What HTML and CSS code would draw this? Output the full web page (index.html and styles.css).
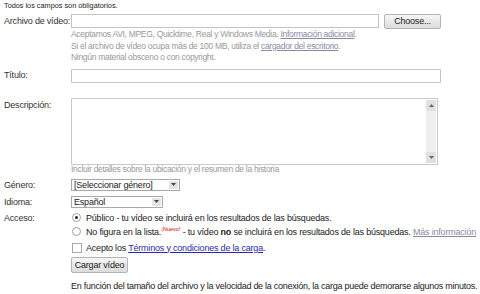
FILE: index.html
```html
<!DOCTYPE html>
<html lang="es">
<head>
<meta charset="utf-8">
<title>Subir vídeo</title>
<link rel="stylesheet" href="styles.css">
</head>
<body>
<div class="page">
  <div class="required">Todos los campos son obligatorios.</div>

  <div class="row r-file">
    <div class="label lh14">Archivo de vídeo:</div>
    <div class="field">
      <div class="file-row">
        <div class="input file-input"></div>
        <div class="btn choose">Choose...</div>
      </div>
      <div class="help">Aceptamos AVI, MPEG, Quicktime, Real y Windows Media. <a class="glink">Información adicional</a>.</div>
      <div class="help">Si el archivo de vídeo ocupa más de 100 MB, utiliza el <a class="glink">cargador del escritorio</a>.</div>
      <div class="help">Ningún material obsceno o con copyright.</div>
    </div>
  </div>

  <div class="row r-title">
    <div class="label lh12">Título:</div>
    <div class="field"><div class="input title-input"></div></div>
  </div>

  <div class="row r-desc">
    <div class="label lh14">Descripción:</div>
    <div class="field">
      <div class="textarea">
        <div class="scroll">
          <div class="sbtn"><svg width="5" height="3" viewBox="0 0 5 3"><path d="M0 3 L2.5 0 L5 3Z" fill="#666"/></svg></div>
          <div class="strack"></div>
          <div class="sbtn"><svg width="5" height="3" viewBox="0 0 5 3"><path d="M0 0 L2.5 3 L5 0Z" fill="#666"/></svg></div>
        </div>
      </div>
      <div class="help desc-help">Incluir detalles sobre la ubicación y el resumen de la historia</div>
    </div>
  </div>

  <div class="row r-genre">
    <div class="label lh12">Género:</div>
    <div class="field">
      <div class="select genre"><span>[Seleccionar género]</span><span class="arrow"><svg width="5" height="3" viewBox="0 0 5 3"><path d="M0 0 L2.5 3 L5 0Z" fill="#444"/></svg></span></div>
    </div>
  </div>

  <div class="row r-lang">
    <div class="label lh12">Idioma:</div>
    <div class="field">
      <div class="select lang"><span>Español</span><span class="arrow"><svg width="5" height="3" viewBox="0 0 5 3"><path d="M0 0 L2.5 3 L5 0Z" fill="#444"/></svg></span></div>
    </div>
  </div>

  <div class="row r-access">
    <div class="label lh14">Acceso:</div>
    <div class="field">
      <div class="opt"><span class="radio on"></span><span>Público - tu vídeo se incluirá en los resultados de las búsquedas.</span></div>
      <div class="opt"><span class="radio"></span><span>No figura en la lista.<sup class="new">¡Nuevo!</sup> - tu vídeo <b>no</b> se incluirá en los resultados de las búsquedas. <a class="glink">Más información</a></span></div>
      <div class="opt check-row"><span class="check"></span><span>Acepto los <a class="blink">Términos y condiciones de la carga</a>.</span></div>
      <div class="btn upload">Cargar vídeo</div>
      <div class="note">En función del tamaño del archivo y la velocidad de la conexión, la carga puede demorarse algunos minutos.</div>
    </div>
  </div>
</div>
</body>
</html>
```
FILE: styles.css
```css
html, body {
  margin: 0;
  padding: 0;
  background: #fff;
}
body {
  font-family: "Liberation Sans", Arial, sans-serif;
  font-size: 9px;
  letter-spacing: -0.2px;
  color: #222;
  overflow: hidden;
}
.page {
  padding: 1px 0 0 4px;
  width: 476px;
}
.required {
  font-size: 7.3px;
  letter-spacing: 0;
  line-height: 9px;
  color: #222;
}
.row {
  display: flex;
  align-items: flex-start;
}
.r-file { margin-top: 4px; }
.r-title { margin-top: 5px; }
.r-desc { margin-top: 15px; }
.r-genre { margin-top: 5px; }
.r-lang { margin-top: 5px; }
.r-access { margin-top: 3px; }

.label {
  width: 67px;
  flex: none;
  white-space: nowrap;
  color: #333;
}
.lh14 { line-height: 14px; }
.lh12 { line-height: 12px; }
.field {
  flex: 1;
  min-width: 0;
}
.file-row {
  display: flex;
  align-items: flex-start;
  gap: 5px;
  height: 15px;
}
.input {
  box-sizing: border-box;
  border: 1px solid #c4c4c4;
  background: #fff;
}
.file-input { width: 308px; height: 14px; }
.title-input { width: 370px; height: 14px; }
.btn {
  box-sizing: border-box;
  border: 1px solid #b4b4b4;
  border-radius: 2px;
  background: linear-gradient(#f6f6f6, #dcdcdc);
  color: #222;
  text-align: center;
}
.choose {
  width: 57px;
  height: 15px;
  line-height: 13px;
}
.help {
  color: #999;
  font-size: 8.5px;
  letter-spacing: -0.3px;
  line-height: 11.5px;
}
.glink {
  color: #8a8aa4;
  text-decoration: underline;
}
.blink {
  color: #2a2aa8;
  text-decoration: underline;
}
.textarea {
  box-sizing: border-box;
  width: 367px;
  height: 67px;
  border: 1px solid #c8c8c8;
  display: flex;
  justify-content: flex-end;
  padding: 1px;
}
.scroll {
  width: 10px;
  display: flex;
  flex-direction: column;
  background: #efefef;
}
.sbtn {
  height: 11px;
  display: flex;
  align-items: center;
  justify-content: center;
  background: #e0e0e0;
}
.strack { flex: 1; }
.desc-help {
  line-height: 9px;
}
.select {
  box-sizing: border-box;
  height: 12px;
  border: 1px solid #a8a8a8;
  display: flex;
  align-items: center;
  justify-content: space-between;
  padding-left: 2px;
  color: #222;
  background: #fff;
  line-height: 10px;
}
.genre { width: 109px; }
.lang { width: 92px; }
.arrow {
  width: 9px;
  height: 8px;
  margin-right: 1px;
  background: #e4e4e4;
  display: flex;
  align-items: center;
  justify-content: center;
}
.opt {
  display: flex;
  align-items: center;
  color: #222;
  height: 14px;
  white-space: nowrap;
}
.radio {
  box-sizing: border-box;
  width: 9px;
  height: 9px;
  border: 1px solid #a0a0a0;
  border-radius: 50%;
  margin: 0 5px 0 1px;
  display: flex;
  align-items: center;
  justify-content: center;
  background: #fff;
}
.radio.on::after {
  content: "";
  width: 3px;
  height: 3px;
  border-radius: 50%;
  background: #222;
}
.check {
  box-sizing: border-box;
  width: 10px;
  height: 10px;
  border: 1px solid #a8a8a8;
  margin: 0 4px 0 1px;
  background: #fff;
}
.check-row { margin-top: 2px; }
.new {
  color: #cc0000;
  font-size: 5.5px;
  letter-spacing: 0;
  vertical-align: top;
  line-height: 6px;
  position: relative;
  top: -1px;
}
.upload {
  width: 57px;
  height: 16px;
  line-height: 14px;
  margin-top: 2px;
}
.note {
  margin-top: 8px;
  line-height: 10px;
  letter-spacing: -0.26px;
  color: #222;
  white-space: nowrap;
}
```
